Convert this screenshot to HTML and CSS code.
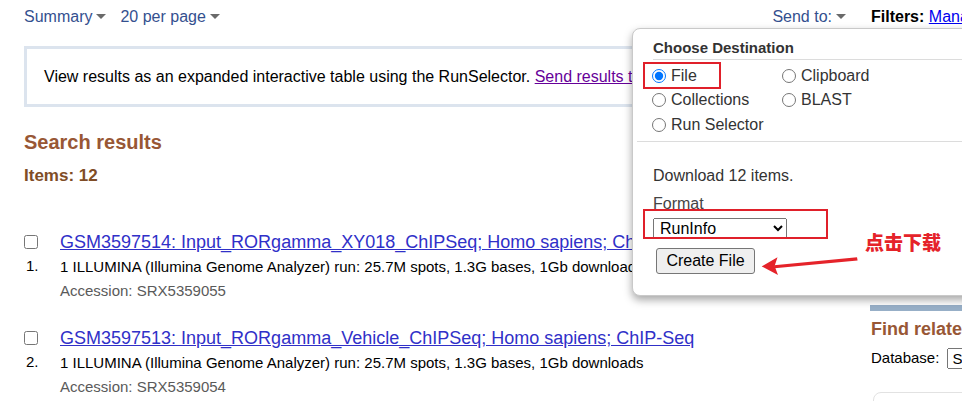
FILE: index.html
```html
<!DOCTYPE html>
<html lang="en">
<head>
<meta charset="utf-8">
<title>SRA search results</title>
<link rel="stylesheet" href="styles.css">
</head>
<body>
<div class="page">
  <main class="main">
    <div class="toolbar">
      <div class="views">
        <a class="menu">Summary<span class="caret"></span></a>
        <a class="menu">20 per page<span class="caret"></span></a>
      </div>
      <a class="menu">Send to:<span class="caret"></span></a>
    </div>
    <div class="infobox">View results as an expanded interactive table using the RunSelector. <a class="visited" href="#">Send results to Run selector</a></div>
    <h2 class="title">Search results</h2>
    <h3 class="count">Items: 12</h3>
    <div class="results">
      <div class="item">
        <div class="mark">
          <input type="checkbox" class="check">
          <span class="num">1.</span>
        </div>
        <div class="body">
          <a class="rlink" href="#">GSM3597514: Input_RORgamma_XY018_ChIPSeq; Homo sapiens; ChIP-Seq</a>
          <div class="desc">1 ILLUMINA (Illumina Genome Analyzer) run: 25.7M spots, 1.3G bases, 1Gb downloads</div>
          <div class="acc">Accession: SRX5359055</div>
        </div>
      </div>
      <div class="item">
        <div class="mark">
          <input type="checkbox" class="check">
          <span class="num">2.</span>
        </div>
        <div class="body">
          <a class="rlink" href="#">GSM3597513: Input_RORgamma_Vehicle_ChIPSeq; Homo sapiens; ChIP-Seq</a>
          <div class="desc">1 ILLUMINA (Illumina Genome Analyzer) run: 25.7M spots, 1.3G bases, 1Gb downloads</div>
          <div class="acc">Accession: SRX5359054</div>
        </div>
      </div>
    </div>
  </main>
  <aside class="side">
    <div class="filters"><b>Filters:</b> <a class="plain" href="#">Manage Filters</a></div>
    <div class="bar"></div>
    <h3 class="related">Find related data</h3>
    <div class="dbrow">Database: <select class="dbsel"><option>Select</option></select></div>
    <div class="sidebox"></div>
  </aside>
</div>

<div class="popup">
  <div class="ptitle">Choose Destination</div>
  <div class="dests">
    <label class="dest"><input type="radio" name="d" checked>File</label>
    <label class="dest"><input type="radio" name="d">Clipboard</label>
    <label class="dest"><input type="radio" name="d">Collections</label>
    <label class="dest"><input type="radio" name="d">BLAST</label>
    <label class="dest"><input type="radio" name="d">Run Selector</label>
  </div>
  <div class="pbody">
    <div class="dl">Download 12 items.</div>
    <div class="fmt">Format</div>
    <select class="fmtsel"><option>RunInfo</option></select>
    <button class="create" type="button">Create File</button>
  </div>
  <div class="hl hl-file"></div>
  <div class="hl hl-fmt"></div>
</div>

<div class="note">点击下载</div>
<svg class="arrow" width="110" height="30" viewBox="0 0 110 30">
  <path d="M19 15.2 L102 7.2 L102.6 10.4 L19.5 18.2 Z" fill="#e5232a"/>
  <path d="M6.7 16.4 L22.5 7.3 L19.6 16.1 L23 25 Z" fill="#e5232a"/>
</svg>
</body>
</html>
```
FILE: styles.css
```css
html, body {
  margin: 0;
  padding: 0;
  width: 962px;
  height: 401px;
  overflow: hidden;
  background: #fff;
  font-family: "Liberation Sans", Arial, sans-serif;
  color: #000;
}

a { cursor: pointer; }

.page {
  display: grid;
  grid-template-columns: 822px 260px;
  column-gap: 25px;
  padding-left: 24px;
  width: 1150px;
}

/* top toolbar */
.toolbar {
  display: flex;
  justify-content: space-between;
  padding-top: 7px;
  font-size: 16px;
  line-height: 20px;
}
.views {
  display: flex;
  gap: 14px;
}
.menu {
  color: #34508f;
  text-decoration: none;
  white-space: nowrap;
}
.caret {
  display: inline-block;
  width: 0;
  height: 0;
  margin-left: 4px;
  border-left: 5px solid transparent;
  border-right: 5px solid transparent;
  border-top: 5px solid #6a6a6a;
  vertical-align: 3px;
}

/* info box */
.infobox {
  margin-top: 19px;
  border: 3px solid #dce4ee;
  padding: 18px 17px 17px;
  font-size: 16px;
  line-height: 20px;
  white-space: nowrap;
  overflow: hidden;
}
.visited { color: #660099; }

.title {
  margin: 23px 0 0;
  font-size: 20px;
  line-height: 24px;
  font-weight: bold;
  color: #985735;
}
.count {
  margin: 12px 0 0;
  font-size: 17px;
  line-height: 20px;
  font-weight: bold;
  color: #7f4d26;
}

/* result list */
.results {
  margin-top: 45px;
  display: flex;
  flex-direction: column;
  gap: 24px;
}
.item {
  display: grid;
  grid-template-columns: 36px 1fr;
}
.mark {
  display: flex;
  flex-direction: column;
  align-items: flex-start;
}
.check {
  width: 14px;
  height: 14px;
  margin: 4px 0 0;
}
.num {
  margin-top: 7px;
  padding-left: 2px;
  font-size: 15px;
  line-height: 20px;
}
.body {
  display: flex;
  flex-direction: column;
  align-items: flex-start;
}
.rlink {
  font-size: 18px;
  line-height: 22px;
  color: #3030c8;
  white-space: nowrap;
}
.desc {
  margin-top: 2px;
  font-size: 15px;
  line-height: 24px;
  white-space: nowrap;
}
.acc {
  font-size: 15px;
  line-height: 24px;
  color: #5a5a5a;
}

/* sidebar */
.side {
  display: flex;
  flex-direction: column;
  align-items: flex-start;
}
.filters {
  padding-top: 7px;
  font-size: 16px;
  line-height: 20px;
  white-space: nowrap;
}
.plain { color: #0000ee; }
.bar {
  align-self: stretch;
  margin-top: 278px;
  margin-left: -1px;
  height: 6px;
  background: #97afc7;
}
.related {
  margin: 7px 0 0;
  font-size: 18px;
  line-height: 22px;
  font-weight: bold;
  color: #985735;
  white-space: nowrap;
}
.dbrow {
  margin-top: 7px;
  font-size: 15px;
  line-height: 22px;
  display: flex;
  align-items: center;
  gap: 8px;
}
.dbsel {
  height: 21px;
  width: 120px;
  font-family: "Liberation Sans", Arial, sans-serif;
  font-size: 15px;
}
.sidebox {
  margin-top: 23px;
  margin-left: 2px;
  width: 240px;
  height: 40px;
  border: 1px solid #e2e2e2;
  border-radius: 8px;
}

/* send-to popup */
.popup {
  position: absolute;
  left: 632px;
  top: 28px;
  width: 360px;
  height: 266px;
  background: #fff;
  border: 1px solid #c9c9c9;
  border-radius: 8px;
  box-shadow: 0 4px 9px rgba(0, 0, 0, 0.35);
  color: #333;
}
.ptitle {
  margin: 9px 0 0 20px;
  font-size: 15px;
  line-height: 20px;
  font-weight: bold;
  padding-bottom: 1px;
  border-bottom: 1px solid #dcdcdc;
}
.dests {
  display: grid;
  grid-template-columns: 130px 130px;
  grid-auto-rows: 24.5px;
  padding: 3.5px 0 0 19px;
  margin: 0 4px 0 0;
}
.dest {
  display: flex;
  align-items: center;
  font-size: 16px;
  line-height: 24px;
  white-space: nowrap;
}
.dest input {
  width: 14px;
  height: 14px;
  margin: 0 5px 0 0;
}
.pbody {
  margin: 4px 4px 0;
  border-top: 1px solid #dcdcdc;
  padding: 24px 16px 0;
  display: flex;
  flex-direction: column;
  align-items: flex-start;
}
.dl {
  font-size: 16px;
  line-height: 20px;
}
.fmt {
  margin-top: 8px;
  font-size: 16px;
  line-height: 20px;
  color: #444;
}
.fmtsel {
  margin-top: 4px;
  width: 134px;
  height: 21px;
  font-family: "Liberation Sans", Arial, sans-serif;
  font-size: 16px;
  color: #000;
  padding: 0 2px;
}
.create {
  margin: 9px 0 0 3px;
  width: 99px;
  height: 26px;
  padding: 0;
  font-family: "Liberation Sans", Arial, sans-serif;
  font-size: 16px;
  color: #000;
  background: #efefef;
  border: 1px solid #767676;
  border-radius: 3px;
}

/* red annotations */
.hl {
  position: absolute;
  border: 2px solid #e0202a;
}
.hl-file {
  left: 10px;
  top: 33px;
  width: 74px;
  height: 23px;
}
.hl-fmt {
  left: 10px;
  top: 180px;
  width: 181px;
  height: 26px;
}
.note {
  position: absolute;
  left: 865px;
  top: 231px;
  font-family: "Noto Sans CJK SC", sans-serif;
  font-weight: 900;
  font-size: 19px;
  line-height: 22px;
  color: #e5232a;
  white-space: nowrap;
}
.arrow {
  position: absolute;
  left: 755px;
  top: 250px;
}
```
